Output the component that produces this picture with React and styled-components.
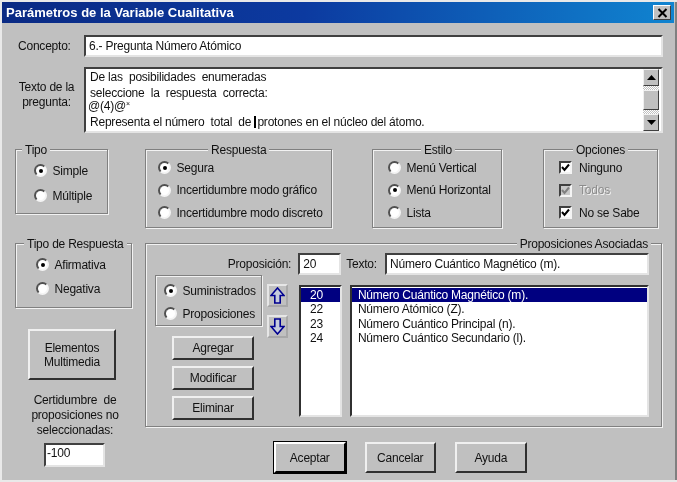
import React from "react";
import styled, { createGlobalStyle } from "styled-components";

const GlobalStyle = createGlobalStyle`
  html, body {
    margin: 0;
    background: #e9e9e9;
  }
  body {
    font-family: "Liberation Sans", Arial, sans-serif;
    font-size: 12px;
    letter-spacing: -0.22px;
    color: #111;
  }
`;

export default function App() {
  return (
    <>
      <GlobalStyle />
      <Dialog>
        <TitleBar>
          <span>Parámetros de la Variable Cualitativa</span>
          <CloseButton>
            <svg width="11" height="10" viewBox="0 0 11 10">
              <path d="M1.5 1 L9.5 9 M9.5 1 L1.5 9" stroke="#000" strokeWidth="2" fill="none" />
            </svg>
          </CloseButton>
        </TitleBar>
        <Body>
          <FieldRow>
            <FieldLabel>Concepto:</FieldLabel>
            <TextBox $h={22}>6.- Pregunta Número Atómico</TextBox>
          </FieldRow>
          <QuestionRow>
            <QuestionLabel>Texto de la<br />pregunta:</QuestionLabel>
            <Memo>
              <MemoText>
                <MemoLine $top={2} $left={3}>De las  posibilidades  enumeradas</MemoLine>
                <MemoLine $top={3} $left={3}>seleccione  la  respuesta  correcta:</MemoLine>
                <MemoLine $top={0} $left={1}>@(4)@<Sup>×</Sup></MemoLine>
                <MemoLine $top={3} $left={3}>Representa el número  total  de <Caret />protones en el núcleo del átomo.</MemoLine>
              </MemoText>
              <ScrollBar>
                <ScrollButton>
                  <svg width="9" height="5" viewBox="0 0 9 5"><path d="M4.5 0 L9 5 L0 5 Z" fill="#000" /></svg>
                </ScrollButton>
                <ScrollTrack />
                <ScrollThumb />
                <ScrollTrack />
                <ScrollButton>
                  <svg width="9" height="5" viewBox="0 0 9 5"><path d="M0 0 L9 0 L4.5 5 Z" fill="#000" /></svg>
                </ScrollButton>
              </ScrollBar>
            </Memo>
          </QuestionRow>

          <Panels>
            <LeftColumn>
              <Group $w={93} $h={65}>
                <Legend $left={6}>Tipo</Legend>
                <Options $gap={12} $top={14} $left={18}>
                  <Radio checked label="Simple" />
                  <Radio label="Múltiple" />
                </Options>
              </Group>
              <Group $w={117} $h={65} $mt={29}>
                <Legend $left={8}>Tipo de Respuesta</Legend>
                <Options $gap={11} $top={14} $left={20}>
                  <Radio checked label="Afirmativa" />
                  <Radio label="Negativa" />
                </Options>
              </Group>
              <MediaButton>Elementos<br />Multimedia</MediaButton>
              <Certainty>Certidumbre  de<br />proposiciones no<br />seleccionadas:</Certainty>
              <CertaintyInput>-100</CertaintyInput>
            </LeftColumn>

            <RightColumn>
              <TopGroups>
                <Group $w={187} $h={79}>
                  <Legend $left={62}>Respuesta</Legend>
                  <Options $gap={9.5} $top={11} $left={12}>
                    <Radio checked label="Segura" />
                    <Radio label="Incertidumbre modo gráfico" />
                    <Radio label="Incertidumbre modo discreto" />
                  </Options>
                </Group>
                <Group $w={130} $h={79} $ml={40}>
                  <Legend $left={48}>Estilo</Legend>
                  <Options $gap={9.5} $top={11} $left={15}>
                    <Radio label="Menú Vertical" />
                    <Radio checked label="Menú Horizontal" />
                    <Radio label="Lista" />
                  </Options>
                </Group>
                <Group $w={115} $h={79} $ml={41}>
                  <Legend $left={29}>Opciones</Legend>
                  <Options $gap={9.5} $top={11} $left={15}>
                    <Check label="Ninguno" />
                    <Check disabled label="Todos" />
                    <Check label="No se Sabe" />
                  </Options>
                </Group>
              </TopGroups>

              <Propositions>
                <Legend $right={10}>Proposiciones Asociadas</Legend>
                <EditRow>
                  <EditLabel>Proposición:</EditLabel>
                  <TextBox $h={22} $w={43}>20</TextBox>
                  <TextLabel>Texto:</TextLabel>
                  <TextBox $h={22} $w={264}>Número Cuántico Magnético (m).</TextBox>
                </EditRow>
                <ListArea>
                  <Controls>
                    <SourceGroup>
                      <Options $gap={10} $top={8} $left={8}>
                        <Radio checked label="Suministrados" />
                        <Radio label="Proposiciones" />
                      </Options>
                    </SourceGroup>
                    <Arrows>
                      <ArrowButton>
                        <svg width="15" height="17" viewBox="0 0 15 17">
                          <path d="M7.5 1 L14 8.5 L10.2 8.5 L10.2 16 L4.8 16 L4.8 8.5 L1 8.5 Z" fill="#c6ccdc" stroke="#000090" strokeWidth="1.6" />
                        </svg>
                      </ArrowButton>
                      <ArrowButton>
                        <svg width="15" height="17" viewBox="0 0 15 17">
                          <path d="M7.5 16 L14 8.5 L10.2 8.5 L10.2 1 L4.8 1 L4.8 8.5 L1 8.5 Z" fill="#c6ccdc" stroke="#000090" strokeWidth="1.6" />
                        </svg>
                      </ArrowButton>
                    </Arrows>
                    <Actions>
                      <ActionButton>Agregar</ActionButton>
                      <ActionButton>Modificar</ActionButton>
                      <ActionButton>Eliminar</ActionButton>
                    </Actions>
                  </Controls>
                  <ListBox $w={43} $pad={8}>
                    {["20", "22", "23", "24"].map((n, i) => (
                      <ListItem key={n} $selected={i === 0} $pad={9}>{n}</ListItem>
                    ))}
                  </ListBox>
                  <ListBox $w={300}>
                    {[
                      "Número Cuántico Magnético (m).",
                      "Número Atómico (Z).",
                      "Número Cuántico Principal (n).",
                      "Número Cuántico Secundario (l).",
                    ].map((t, i) => (
                      <ListItem key={t} $selected={i === 0} $pad={6}>{t}</ListItem>
                    ))}
                  </ListBox>
                </ListArea>
              </Propositions>

              <Footer>
                <FooterButton $default>Aceptar</FooterButton>
                <FooterButton>Cancelar</FooterButton>
                <FooterButton>Ayuda</FooterButton>
              </Footer>
            </RightColumn>
          </Panels>
        </Body>
      </Dialog>
    </>
  );
}

function Radio({ checked, label }) {
  return (
    <OptionRow>
      <RadioDot $checked={checked} />
      <span>{label}</span>
    </OptionRow>
  );
}

function Check({ disabled, label }) {
  return (
    <OptionRow $disabled={disabled} $gap={7}>
      <CheckBox $disabled={disabled}>
        <svg width="9" height="9" viewBox="0 0 9 9">
          <path d="M1 4 L3.5 7 L8 1.5" fill="none" stroke={disabled ? "#808080" : "#000"} strokeWidth="2" />
        </svg>
      </CheckBox>
      <span>{label}</span>
    </OptionRow>
  );
}

const Dialog = styled.div`
  width: 673px;
  height: 478px;
  margin-left: 2px;
  margin-top: 2px;
  background: #c0c0c0;
  border-right: 2px solid #808080;
  filter: blur(0.35px);
`;

const TitleBar = styled.div`
  height: 21px;
  margin-right: 1px;
  padding: 0 3px 0 4px;
  display: flex;
  align-items: center;
  justify-content: space-between;
  background: linear-gradient(90deg, #0a2a84 0%, #0c3aa0 45%, #1084d0 100%);
  color: #fff;
  font-weight: bold;
  font-size: 13px;
  letter-spacing: 0;
`;

const CloseButton = styled.div`
  width: 16px;
  height: 13px;
  display: flex;
  align-items: center;
  justify-content: center;
  background: #c0c0c0;
  border: 1px solid;
  border-color: #fff #404040 #404040 #fff;
`;

const Body = styled.div`
  padding: 12px 12px 0 13px;
`;

const FieldRow = styled.div`
  display: flex;
  align-items: center;
`;

const QuestionRow = styled(FieldRow)`
  margin-top: 10px;
  align-items: flex-start;
`;

const FieldLabel = styled.div`
  width: 69px;
  flex: none;
  padding-left: 3px;
  box-sizing: border-box;
  line-height: 15px;
`;

const QuestionLabel = styled(FieldLabel)`
  margin-top: 13px;
  padding: 0 6px 0 0;
  text-align: center;
`;

const TextBox = styled.div`
  box-sizing: border-box;
  flex: ${(p) => (p.$w ? "none" : "1")};
  width: ${(p) => (p.$w ? `${p.$w}px` : "auto")};
  height: ${(p) => p.$h}px;
  padding: 0 3px;
  display: flex;
  align-items: center;
  background: #fff;
  border: 2px solid;
  border-color: #404040 #e4e4e4 #e4e4e4 #404040;
`;

const Memo = styled.div`
  flex: 1;
  box-sizing: border-box;
  height: 66px;
  display: flex;
  justify-content: space-between;
  background: #fff;
  border: 2px solid;
  border-color: #404040 #e4e4e4 #e4e4e4 #404040;
`;

const MemoText = styled.div`
  padding: 0 0 0 1px;
`;

const MemoLine = styled.div`
  margin-top: ${(p) => p.$top}px;
  margin-left: ${(p) => p.$left}px;
  height: 13px;
  line-height: 13px;
  white-space: pre;
`;

const Sup = styled.span`
  font-size: 7px;
  line-height: 0;
  vertical-align: 4px;
`;

const Caret = styled.span`
  display: inline-block;
  width: 2px;
  height: 12px;
  margin-right: 1px;
  background: #000;
  vertical-align: -2px;
`;

const ScrollBar = styled.div`
  width: 16px;
  margin-right: 2px;
  display: flex;
  flex-direction: column;
`;

const ScrollButton = styled.div`
  height: 17px;
  flex: none;
  box-sizing: border-box;
  display: flex;
  align-items: center;
  justify-content: center;
  background: #c0c0c0;
  border: 1px solid;
  border-color: #f0f0f0 #404040 #404040 #f0f0f0;
`;

const ScrollTrack = styled.div`
  flex: 1;
  background: repeating-conic-gradient(#fff 0 25%, #c0c0c0 0 50%) 0 0 / 2px 2px;
`;

const ScrollThumb = styled(ScrollButton)`
  height: 20px;
`;

const Panels = styled.div`
  margin-top: 16px;
  display: grid;
  grid-template-columns: 117px 517px;
  column-gap: 13px;
`;

const LeftColumn = styled.div`
  display: flex;
  flex-direction: column;
`;

const RightColumn = styled.div`
  display: flex;
  flex-direction: column;
`;

const TopGroups = styled.div`
  display: flex;
`;

const Group = styled.div`
  position: relative;
  box-sizing: border-box;
  width: ${(p) => p.$w}px;
  height: ${(p) => p.$h}px;
  margin-top: ${(p) => p.$mt || 0}px;
  margin-left: ${(p) => p.$ml || 0}px;
  border: 1px solid #808080;
  box-shadow: 1px 1px 0 #f2f2f2, inset 1px 1px 0 #f2f2f2;
`;

const Legend = styled.div`
  position: absolute;
  top: -7px;
  ${(p) => (p.$right !== undefined ? `right: ${p.$right}px;` : `left: ${p.$left}px;`)}
  padding: 0 3px;
  line-height: 14px;
  background: #c0c0c0;
`;

const Options = styled.div`
  display: flex;
  flex-direction: column;
  gap: ${(p) => p.$gap}px;
  padding-top: ${(p) => p.$top}px;
  padding-left: ${(p) => p.$left}px;
`;

const OptionRow = styled.div`
  display: flex;
  align-items: center;
  gap: ${(p) => p.$gap || 5.5}px;
  height: 13px;
  white-space: nowrap;
  color: ${(p) => (p.$disabled ? "#8c8c8c" : "inherit")};
  text-shadow: ${(p) => (p.$disabled ? "1px 1px 0 #f4f4f4" : "none")};
`;

const RadioDot = styled.span`
  position: relative;
  box-sizing: border-box;
  width: 13px;
  height: 13px;
  flex: none;
  border-radius: 50%;
  background: #fff;
  border: 2px solid;
  border-color: #505050 #f4f4f4 #f4f4f4 #505050;
  &::after {
    content: "";
    display: ${(p) => (p.$checked ? "block" : "none")};
    position: absolute;
    top: 2.5px;
    left: 2.5px;
    width: 4px;
    height: 4px;
    border-radius: 50%;
    background: #000;
  }
`;

const CheckBox = styled.span`
  box-sizing: border-box;
  width: 13px;
  height: 13px;
  flex: none;
  display: flex;
  align-items: center;
  justify-content: center;
  background: ${(p) => (p.$disabled ? "#c8c8c8" : "#fff")};
  border: 2px solid;
  border-color: #404040 #f4f4f4 #f4f4f4 #404040;
`;

const Raised = styled.div`
  box-sizing: border-box;
  display: flex;
  align-items: center;
  justify-content: center;
  text-align: center;
  background: #c0c0c0;
  border: 2px solid;
  border-color: #f0f0f0 #303030 #303030 #f0f0f0;
`;

const MediaButton = styled(Raised)`
  width: 88px;
  height: 51px;
  margin: 21px 0 0 13px;
  line-height: 14px;
`;

const Certainty = styled.div`
  margin-top: 13px;
  width: 120px;
  text-align: center;
  line-height: 15px;
  white-space: pre;
`;

const CertaintyInput = styled(TextBox)`
  flex: none;
  width: 61px;
  height: 24px;
  margin: 5px 0 0 29px;
  padding: 0 0 4px 1px;
`;

const Propositions = styled.div`
  position: relative;
  box-sizing: border-box;
  height: 184px;
  margin-top: 15px;
  padding: 9px 12px 0 9px;
  border: 1px solid #808080;
  box-shadow: 1px 1px 0 #f2f2f2, inset 1px 1px 0 #f2f2f2;
`;

const EditRow = styled.div`
  display: flex;
  align-items: center;
`;

const EditLabel = styled.div`
  width: 137px;
  margin-right: 7px;
  text-align: right;
`;

const TextLabel = styled.div`
  width: 39px;
  margin-left: 5px;
`;

const ListArea = styled.div`
  display: flex;
  align-items: flex-start;
`;

const Controls = styled.div`
  width: 133px;
  margin-right: 11px;
  display: grid;
  grid-template-columns: 107px 26px;
  grid-template-rows: 51px auto;
`;

const SourceGroup = styled.div`
  grid-column: 1;
  grid-row: 1;
  box-sizing: border-box;
  border: 1px solid #808080;
  box-shadow: 1px 1px 0 #f2f2f2, inset 1px 1px 0 #f2f2f2;
`;

const Arrows = styled.div`
  grid-column: 2;
  grid-row: 1 / span 2;
  padding: 9px 0 0 5px;
  display: flex;
  flex-direction: column;
  gap: 8px;
`;

const ArrowButton = styled.div`
  box-sizing: border-box;
  width: 21px;
  height: 23px;
  display: flex;
  align-items: center;
  justify-content: center;
  border: 2px solid;
  border-color: #e6e6e6 #a8a8a8 #a8a8a8 #e6e6e6;
`;

const Actions = styled.div`
  grid-column: 1;
  grid-row: 2;
  margin: 10px 0 0 17px;
  display: flex;
  flex-direction: column;
  gap: 6px;
`;

const ActionButton = styled(Raised)`
  width: 82px;
  height: 24px;
`;

const ListBox = styled.div`
  box-sizing: border-box;
  width: ${(p) => p.$w}px;
  height: 132px;
  margin-top: 10px;
  margin-right: ${(p) => p.$pad || 0}px;
  padding-top: 1px;
  background: #fff;
  border: 2px solid;
  border-color: #303030 #e4e4e4 #e4e4e4 #303030;
`;

const ListItem = styled.div`
  height: 14.3px;
  line-height: 14.3px;
  padding-left: ${(p) => p.$pad}px;
  background: ${(p) => (p.$selected ? "#000080" : "transparent")};
  color: ${(p) => (p.$selected ? "#fff" : "inherit")};
`;

const Footer = styled.div`
  margin: 15px 0 0 129px;
  display: flex;
  gap: 19px;
`;

const FooterButton = styled(Raised)`
  width: 71.5px;
  height: 31px;
  border-color: ${(p) => (p.$default ? "#fff #000 #000 #fff" : "#f0f0f0 #303030 #303030 #f0f0f0")};
  outline: ${(p) => (p.$default ? "1px solid #000" : "none")};
`;
